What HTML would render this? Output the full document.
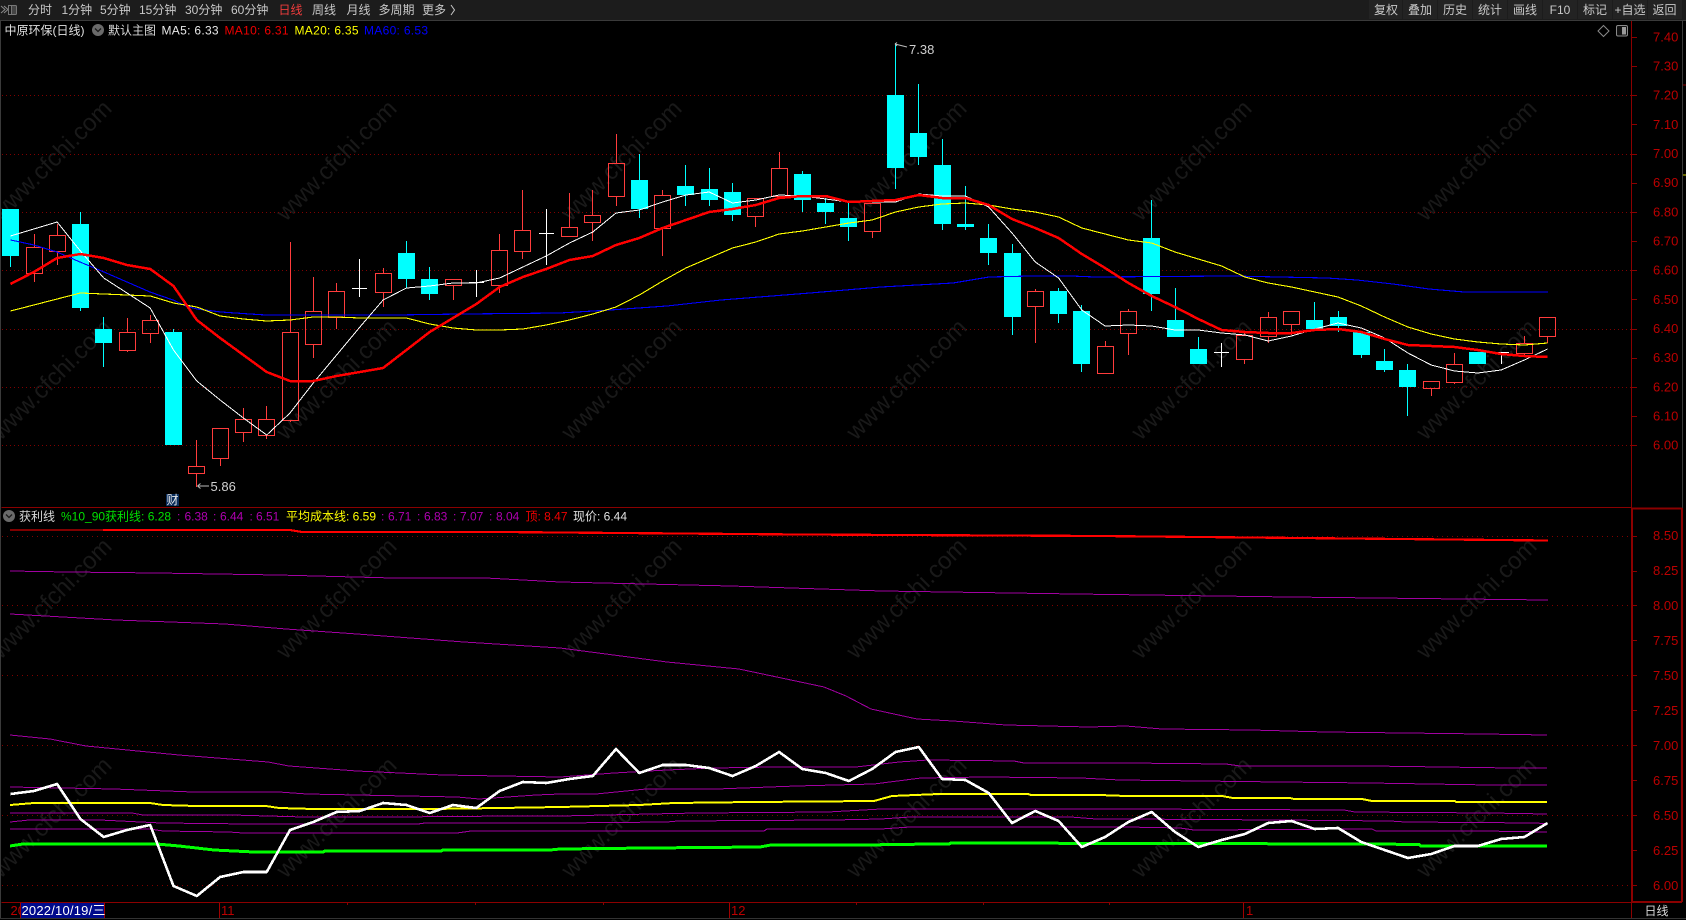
<!DOCTYPE html>
<html lang="zh-CN">
<head>
<meta charset="utf-8">
<title>中原环保(日线)</title>
<style>
html,body{margin:0;padding:0;background:#000;width:1686px;height:920px;overflow:hidden}
svg{display:block;position:absolute;left:0;top:0}
text{font-family:"Liberation Sans","Noto Sans CJK SC",sans-serif;font-size:12px}
.m{fill:#c8c8c8}
.a{fill:#bb0000;font-size:13px}
.wm{fill:#191919;font-size:24px;text-anchor:middle}
.c{text-anchor:middle}
</style>
</head>
<body>
<svg width="1686" height="920" viewBox="0 0 1686 920" xmlns="http://www.w3.org/2000/svg">
<rect width="1686" height="920" fill="#000"/>

<!-- watermark -->
<g class="wm" transform="translate(6 10)">
<text class="wm" x="51" y="156" transform="rotate(-45 51 156)">www.cfchi.com</text>
<text class="wm" x="336" y="156" transform="rotate(-45 336 156)">www.cfchi.com</text>
<text class="wm" x="621" y="156" transform="rotate(-45 621 156)">www.cfchi.com</text>
<text class="wm" x="906" y="156" transform="rotate(-45 906 156)">www.cfchi.com</text>
<text class="wm" x="1191" y="156" transform="rotate(-45 1191 156)">www.cfchi.com</text>
<text class="wm" x="1476" y="156" transform="rotate(-45 1476 156)">www.cfchi.com</text>
<text class="wm" x="51" y="375" transform="rotate(-45 51 375)">www.cfchi.com</text>
<text class="wm" x="336" y="375" transform="rotate(-45 336 375)">www.cfchi.com</text>
<text class="wm" x="621" y="375" transform="rotate(-45 621 375)">www.cfchi.com</text>
<text class="wm" x="906" y="375" transform="rotate(-45 906 375)">www.cfchi.com</text>
<text class="wm" x="1191" y="375" transform="rotate(-45 1191 375)">www.cfchi.com</text>
<text class="wm" x="1476" y="375" transform="rotate(-45 1476 375)">www.cfchi.com</text>
<text class="wm" x="51" y="594" transform="rotate(-45 51 594)">www.cfchi.com</text>
<text class="wm" x="336" y="594" transform="rotate(-45 336 594)">www.cfchi.com</text>
<text class="wm" x="621" y="594" transform="rotate(-45 621 594)">www.cfchi.com</text>
<text class="wm" x="906" y="594" transform="rotate(-45 906 594)">www.cfchi.com</text>
<text class="wm" x="1191" y="594" transform="rotate(-45 1191 594)">www.cfchi.com</text>
<text class="wm" x="1476" y="594" transform="rotate(-45 1476 594)">www.cfchi.com</text>
<text class="wm" x="51" y="813" transform="rotate(-45 51 813)">www.cfchi.com</text>
<text class="wm" x="336" y="813" transform="rotate(-45 336 813)">www.cfchi.com</text>
<text class="wm" x="621" y="813" transform="rotate(-45 621 813)">www.cfchi.com</text>
<text class="wm" x="906" y="813" transform="rotate(-45 906 813)">www.cfchi.com</text>
<text class="wm" x="1191" y="813" transform="rotate(-45 1191 813)">www.cfchi.com</text>
<text class="wm" x="1476" y="813" transform="rotate(-45 1476 813)">www.cfchi.com</text>
</g>

<!-- grid -->
<g stroke="#800000" stroke-width="1" stroke-dasharray="1 3" fill="none" shape-rendering="crispEdges">
<path d="M2 95.5H1632M2 154.5H1632M2 212.5H1632M2 270.5H1632M2 329.5H1632M2 387.5H1632M2 445.5H1632"/>
</g>
<g stroke="#800000" stroke-width="1" stroke-dasharray="1 4" fill="none" shape-rendering="crispEdges">
<path d="M2 536.5H1632M2 605.5H1632M2 675.5H1632M2 745.5H1632M2 815.5H1632M2 885.5H1632"/>
</g>

<!-- cyan candles -->
<g shape-rendering="crispEdges">
<path fill="none" stroke="#00ffff" stroke-width="1" d="M10.5 209V267M80.5 212V311M103.5 317V367M173.5 329V332M406.5 241V288M429.5 267V300M639.5 154V218M685.5 165V206M709.5 168V206M732.5 183V221M802.5 171V212M825.5 198V224M848.5 203V241M895.5 43V189M918.5 84V165M942.5 139V230M965.5 186V230M988.5 224V265M1012.5 244V335M1058.5 288V323M1081.5 305V372M1151.5 200V311M1175.5 288V337M1198.5 337V364M1314.5 302V330M1338.5 311V332M1361.5 332V358M1384.5 349V372M1407.5 364V416"/>
<path fill="#00ffff" d="M2 209h17v47h-17zM72 224h17v84h-17zM95 329h17v14h-17zM165 332h17v113h-17zM398 253h17v26h-17zM421 279h17v15h-17zM631 180h17v29h-17zM677 186h17v9h-17zM701 189h17v11h-17zM724 192h17v23h-17zM794 174h17v26h-17zM817 203h17v9h-17zM840 218h17v9h-17zM887 95h17v73h-17zM910 133h17v24h-17zM934 165h17v59h-17zM957 224h17v3h-17zM980 238h17v15h-17zM1004 253h17v64h-17zM1050 291h17v23h-17zM1073 311h17v53h-17zM1143 238h17v56h-17zM1167 320h17v17h-17zM1190 349h17v15h-17zM1306 320h17v9h-17zM1330 317h17v9h-17zM1353 332h17v23h-17zM1376 361h17v9h-17zM1399 370h17v17h-17zM1469 352h17v12h-17z"/>
</g>

<!-- red candles -->
<g fill="none" stroke="#ff3c3c" stroke-width="1" shape-rendering="crispEdges">
<path d="M34.5 234V247M34.5 273V282M26.5 247.5h16v26h-16zM57.5 224V235M57.5 251V265M49.5 235.5h16v16h-16zM127.5 318V332M127.5 350V352M119.5 332.5h16v18h-16zM150.5 315V320M150.5 333V343M142.5 320.5h16v13h-16zM196.5 440V466M196.5 473V487M188.5 466.5h16v7h-16zM220.5 458V466M212.5 428.5h16v30h-16zM243.5 408V419M243.5 432V442M235.5 419.5h16v13h-16zM266.5 406V419M266.5 435V439M258.5 419.5h16v16h-16zM290.5 242V332M290.5 420V422M282.5 332.5h16v88h-16zM313.5 277V311M313.5 344V358M305.5 311.5h16v33h-16zM336.5 283V291M336.5 317V329M328.5 291.5h16v26h-16zM383.5 268V273M383.5 292V307M375.5 273.5h16v19h-16zM453.5 285V300M445.5 279.5h16v6h-16zM499.5 234V250M499.5 285V293M491.5 250.5h16v35h-16zM522.5 190V230M522.5 251V259M514.5 230.5h16v21h-16zM569.5 193V227M561.5 227.5h16v9h-16zM592.5 190V215M592.5 222V241M584.5 215.5h16v7h-16zM616.5 134V163M616.5 196V206M608.5 163.5h16v33h-16zM662.5 190V195M662.5 228V256M654.5 195.5h16v33h-16zM755.5 216V227M747.5 198.5h16v18h-16zM779.5 152V168M771.5 168.5h16v28h-16zM872.5 231V238M864.5 203.5h16v28h-16zM1035.5 289V291M1035.5 306V343M1027.5 291.5h16v15h-16zM1105.5 341V346M1097.5 346.5h16v27h-16zM1128.5 309V311M1128.5 333V355M1120.5 311.5h16v22h-16zM1244.5 332V335M1244.5 359V364M1236.5 335.5h16v24h-16zM1268.5 312V317M1268.5 336V343M1260.5 317.5h16v19h-16zM1291.5 324V335M1283.5 311.5h16v13h-16zM1431.5 388V396M1423.5 381.5h16v7h-16zM1454.5 353V364M1454.5 382V384M1446.5 364.5h16v18h-16zM1524.5 336V343M1524.5 353V355M1516.5 343.5h16v10h-16zM1547.5 336V343M1539.5 317.5h16v19h-16z"/>
</g>
<!-- white crosses -->
<path fill="none" stroke="#fff" stroke-width="1" shape-rendering="crispEdges" d="M359.5 259V297M352 288.5H367M476.5 270V297M469 282.5H484M546.5 209V265M539 233.5H554M1221.5 343V367M1214 352.5H1229M1501.5 352V364M1494 352.5H1509"/>

<!-- MA lines -->
<g fill="none" stroke-linejoin="round" shape-rendering="crispEdges">
<polyline stroke="#0000ff" stroke-width="1.1" points="10.7,240 34,245 57,252 80,262 104,272 127,282 150,292 173,300 186,306 197,309 221,312 250,314 266,315 290,315 393,315 464,314 560,313 610,310 667,306 721,300 810,293 881,287 953,283 989,277 1031,276 1071,276 1095,277 1232,276 1279,277 1327,278 1357,280 1393,284 1429,289 1464,292 1548,292"/>
<polyline stroke="#ffff00" stroke-width="1.1" points="10.5,311 33.8,305 57.1,299 80.4,293 103.7,294 127,295 150.2,296 173.5,303 196.8,307 220.1,316 243.4,319 266.7,321 290,320 313.3,317 336.6,317 359.9,318 383.1,318 406.4,318 429.7,324 453,328 476.3,330 499.6,330 522.9,329 546.2,325 569.5,320 592.8,314 616,307 639.3,295 662.6,281 685.9,268 709.2,258 732.5,248 755.8,242 779.1,234 802.4,231 825.7,227 848.9,223 872.2,220 895.5,212 918.8,207 942.1,204 965.4,203 988.7,205 1012,209 1035.3,212 1058.6,217 1081.8,228 1105.1,234 1128.4,240 1151.7,243 1175,252 1198.3,259 1221.6,266 1244.9,277 1268.2,283 1291.5,287 1314.7,292 1338,297 1361.3,306 1384.6,317 1407.9,327 1431.2,334 1454.5,339 1477.8,342 1501.1,344 1524.4,345 1547.6,343"/>
<polyline stroke="#ffffff" stroke-width="1" points="10.5,236 33.8,229 57.1,222 80.4,251 103.7,278 127,293 150.2,308 173.5,350 196.8,381 220.1,400 243.4,418 266.7,435 290,413 313.3,383 336.6,355 359.9,327 383.1,300 406.4,288 429.7,286 453,283 476.3,283 499.6,278 522.9,267 546.2,256 569.5,243 592.8,232 616,213 639.3,210 662.6,202 685.9,195 709.2,192 732.5,203 755.8,200 779.1,195 802.4,196 825.7,199 848.9,202 872.2,202 895.5,202 918.8,194 942.1,196 965.4,196 988.7,207 1012,233 1035.3,262 1058.6,278 1081.8,310 1105.1,326 1128.4,325 1151.7,326 1175,330 1198.3,330 1221.6,333 1244.9,335 1268.2,341 1291.5,336 1314.7,329 1338,323 1361.3,328 1384.6,338 1407.9,353 1431.2,365 1454.5,371 1477.8,373 1501.1,370 1524.4,360 1547.6,349"/>
<polyline stroke="#ff0000" stroke-width="2.5" points="10.5,284 33.8,272 57.1,258 80.4,254 103.7,258 127,265 150.2,269 173.5,286 196.8,320 220.1,338 243.4,355 266.7,372 290,381 313.3,381 336.6,376 359.9,372 383.1,368 406.4,350 429.7,332 453,318 476.3,304 499.6,287 522.9,277 546.2,269 569.5,260 592.8,256 616,245 639.3,238 662.6,228 685.9,220 709.2,212 732.5,209 755.8,205 779.1,198 802.4,196 825.7,196 848.9,202 872.2,201 895.5,200 918.8,195 942.1,198 965.4,198 988.7,205 1012,219 1035.3,228 1058.6,238 1081.8,254 1105.1,268 1128.4,283 1151.7,296 1175,307 1198.3,319 1221.6,330 1244.9,332 1268.2,333 1291.5,333 1314.7,330 1338,329 1361.3,332 1384.6,339 1407.9,345 1431.2,346 1454.5,347 1477.8,350 1501.1,354 1524.4,356 1547.6,357"/>
</g>

<!-- lower pane lines -->
<g fill="none" stroke-linejoin="round" shape-rendering="crispEdges">
<g stroke="#a000a0" stroke-width="1">
<polyline points="10,571 68,572 157,573 278,575 393,578 486,578 560,582 731,586 882,591 1075,594 1290,597 1548,600"/>
<polyline points="10,614 116,620 225,624 286,629 357,634 464,642 560,648 667,662 739,669 824,687 846,696 871,709 917,719 953,721 1006,725 1089,727 1126,726 1162,729 1251,730 1326,732 1483,734 1547,735"/>
<polyline points="10,735 50,739 86,746 179,755 268,762 289,766 357,771 443,775 560,777 614,773 667,770 714,768 774,767 856,767 899,762 928,760 1014,761 1024,763 1126,763 1226,764 1240,766 1372,766 1512,768 1547,768"/>
<polyline points="10,787 114,789 193,792 279,792 307,794 457,797 479,799 536,795 560,794 596,794 646,789 717,789 796,786 874,784 921,778 985,777 1081,778 1120,780 1280,782 1369,783 1490,785 1547,785"/>
<polyline points="10,813 132,813 143,815 232,815 304,817 393,817 511,816 560,816 696,813 828,812 881,809 949,809 1126,809 1344,810 1355,812 1490,813 1547,814"/>
<polyline points="10,822 29,820 100,820 161,823 250,824 418,824 425,823 560,823 667,822 678,821 833,820 881,819 910,817 1071,817 1096,819 1126,819 1280,820 1390,821 1405,822 1537,823 1547,824"/>
<polyline points="10,829 150,829 163,831 229,832 243,833 457,833 471,831 560,831 764,831 767,829 881,829 910,827 1126,827 1180,828 1194,830 1372,829 1376,831 1483,831 1547,832"/>
</g>
<polyline stroke="#ff0000" stroke-width="1" points="10,530 103,530"/>
<polyline stroke="#ff0000" stroke-width="2.2" points="103,530 290,530 302,532 500,532 800,534.5 1100,536 1300,538 1548,540.5"/>
<polyline stroke="#ffff00" stroke-width="2" points="10,805 34,803 150,803 163,805 196,806 266,806 279,808 314,809 429,809 500,808 560,807 639,805 674,803 753,802 874,801 892,796 939,794 1028,794 1031,795 1099,795 1126,796 1222,796 1233,798 1290,798 1294,799 1362,799 1372,801 1455,801 1456,802 1547,802"/>
<polyline stroke="#00ff00" stroke-width="3" points="10,846 23,844 157,844 179,846 214,850 254,852 323,852 325,851 441,851 443,850 550,850 560,849 649,848 760,847 771,845 880,845 881,844.5 949,844 951,843 1372,844 1419,844.5 1421,846 1547,846"/>
<polyline stroke="#ffffff" stroke-width="2.6" points="10.5,794 33.8,791 57.1,784 80.4,819 103.7,837 127,830 150.2,825 173.5,886 196.8,896 220.1,877 243.4,872 266.7,872 290,830 313.3,822 336.6,812 359.9,811 383.1,803 406.4,805 429.7,813 453,805 476.3,808 499.6,791 522.9,782 546.2,783 569.5,779 592.8,776 616,749 639.3,773 662.6,765 685.9,765 709.2,768 732.5,776 755.8,766 779.1,752 802.4,769 825.7,773 848.9,781 872.2,769 895.5,752 918.8,747 942.1,779 965.4,780 988.7,793 1012,823 1035.3,811 1058.6,821 1081.8,847 1105.1,837 1128.4,822 1151.7,812 1175,832 1198.3,847 1221.6,840 1244.9,834 1268.2,823 1291.5,821 1314.7,829 1338,828 1361.3,842 1384.6,850 1407.9,858 1431.2,854 1454.5,846 1477.8,846 1501.1,839 1524.4,837 1547.6,823"/>
</g>

<!-- annotations -->
<path fill="none" stroke="#bbb" stroke-width="1" d="M895 44l12 3M895 44l2-1.5M895 44l2 2"/>
<text x="909" y="54" fill="#d0d0d0" style="font-size:13px">7.38</text>
<path fill="none" stroke="#bbb" stroke-width="1" d="M197.5 486H209M197.5 486l3-2.5M197.5 486l3 2.5"/>
<text x="210.5" y="491" fill="#d0d0d0" style="font-size:13px">5.86</text>
<rect x="166" y="494" width="13" height="12" fill="#0a2d5c"/>
<text x="172.5" y="504" fill="#e8e8e8" class="c" style="font-size:12px">财</text>

<!-- frames -->
<g shape-rendering="crispEdges" fill="none">
<path stroke="#3a3a3a" d="M0.5 21V918M1682.5 21V508"/>
<path stroke="#8b0000" d="M1631.5 21V508M1.5 507.5H1632M1.5 902.5H1632M1631.5 902V918"/>
<path stroke="#8b0000" stroke-width="2" d="M1632 508.5H1682M1632 902H1682M1632 508V902M1682 508V902"/>
<path stroke="#8b0000" d="M1632 37.5h5M1632 66.5h5M1632 95.5h5M1632 124.5h5M1632 154.5h5M1632 183.5h5M1632 212.5h5M1632 241.5h5M1632 270.5h5M1632 299.5h5M1632 329.5h5M1632 358.5h5M1632 387.5h5M1632 416.5h5M1632 445.5h5M1632 536.5h5M1632 571.5h5M1632 605.5h5M1632 640.5h5M1632 675.5h5M1632 710.5h5M1632 745.5h5M1632 780.5h5M1632 815.5h5M1632 850.5h5M1632 885.5h5"/>
<path stroke="#8b0000" d="M347.5 903v2M475.5 903v2M603.5 903v2M856.5 903v2M983.5 903v2M1109.5 903v2M1683 85h3"/>
<path stroke="#cccc00" d="M1683 175h3"/>
<path stroke="#a00000" d="M219.5 903V918M729.5 903V918M1243.5 903V918"/>
</g>

<!-- axis labels -->
<text class="a" x="1653" y="41.5">7.40</text>
<text class="a" x="1653" y="70.5">7.30</text>
<text class="a" x="1653" y="99.5">7.20</text>
<text class="a" x="1653" y="129">7.10</text>
<text class="a" x="1653" y="158">7.00</text>
<text class="a" x="1653" y="187">6.90</text>
<text class="a" x="1653" y="216.5">6.80</text>
<text class="a" x="1653" y="245.5">6.70</text>
<text class="a" x="1653" y="274.5">6.60</text>
<text class="a" x="1653" y="304">6.50</text>
<text class="a" x="1653" y="333">6.40</text>
<text class="a" x="1653" y="362">6.30</text>
<text class="a" x="1653" y="391.5">6.20</text>
<text class="a" x="1653" y="420.5">6.10</text>
<text class="a" x="1653" y="449.5">6.00</text>
<text class="a" x="1653" y="540">8.50</text>
<text class="a" x="1653" y="575">8.25</text>
<text class="a" x="1653" y="610">8.00</text>
<text class="a" x="1653" y="645">7.75</text>
<text class="a" x="1653" y="680">7.50</text>
<text class="a" x="1653" y="715">7.25</text>
<text class="a" x="1653" y="750">7.00</text>
<text class="a" x="1653" y="785">6.75</text>
<text class="a" x="1653" y="820">6.50</text>
<text class="a" x="1653" y="855">6.25</text>
<text class="a" x="1653" y="890">6.00</text>

<!-- bottom axis -->
<text class="a" x="10.5" y="915">20</text>
<rect x="21" y="903" width="84" height="15" fill="#000a8c"/>
<path d="M20.5 903V918M104.5 903V918" stroke="#a00000" shape-rendering="crispEdges"/>
<text x="21.5" y="915" fill="#fff" style="font-size:13px;letter-spacing:.2px">2022/10/19/三</text>
<text class="a" x="221" y="915">11</text>
<text class="a" x="731" y="915">12</text>
<text class="a" x="1246" y="915">1</text>
<text x="1656.5" y="915" class="c" fill="#d8d8d8" style="font-size:12px">日线</text>
<rect x="0" y="918" width="1686" height="2" fill="#000"/>
<path d="M0 918.5H1686" stroke="#333" shape-rendering="crispEdges"/>

<!-- top toolbar -->
<rect x="0" y="0" width="1686" height="20" fill="#1c1c1c"/>
<rect x="0" y="20" width="1686" height="1" fill="#3a3a3a"/>
<g fill="#232323">
<rect x="1369" y="0" width="33" height="19"/><rect x="1403" y="0" width="34" height="19"/><rect x="1438" y="0" width="34" height="19"/><rect x="1473" y="0" width="34" height="19"/><rect x="1508" y="0" width="34" height="19"/><rect x="1543" y="0" width="34" height="19"/><rect x="1578" y="0" width="34" height="19"/><rect x="1613" y="0" width="34" height="19"/><rect x="1648" y="0" width="34" height="19"/>
</g>
<path fill="none" stroke="#8a8a8a" stroke-width="1" d="M1 6l4 3.5-4 3.5M4 6l4 3.5-4 3.5"/>
<rect x="8.5" y="5.5" width="8" height="9" fill="#444" stroke="#777" rx="1"/>
<rect x="8.5" y="5.5" width="3" height="9" fill="#1c1c1c" stroke="#777"/>
<text class="m" x="28" y="14">分时</text>
<text class="m" x="61.5" y="14">1分钟</text>
<text class="m" x="100" y="14">5分钟</text>
<text class="m" x="139" y="14">15分钟</text>
<text class="m" x="185" y="14">30分钟</text>
<text class="m" x="231" y="14">60分钟</text>
<text x="278.5" y="14" fill="#f03c3c">日线</text>
<text class="m" x="312" y="14">周线</text>
<text class="m" x="346.5" y="14">月线</text>
<text class="m" x="378.5" y="14">多周期</text>
<text class="m" x="422" y="14">更多</text>
<path fill="none" stroke="#c8c8c8" d="M451 5l3.5 5-3.5 5"/>
<text class="m c" x="1386" y="14">复权</text>
<text class="m c" x="1420" y="14">叠加</text>
<text class="m c" x="1455" y="14">历史</text>
<text class="m c" x="1490" y="14">统计</text>
<text class="m c" x="1525" y="14">画线</text>
<text class="m c" x="1560" y="14">F10</text>
<text class="m c" x="1595" y="14">标记</text>
<text class="m c" x="1630" y="14">+自选</text>
<text class="m c" x="1664.5" y="14">返回</text>

<!-- top header -->
<text x="4.5" y="34.5" fill="#e0e0e0">中原环保(日线)</text>
<circle cx="98" cy="30" r="6" fill="#6a6a6a"/>
<path fill="none" stroke="#1a1a1a" stroke-width="1.3" d="M95 28.5l3 3 3-3"/>
<text x="108" y="34.5" fill="#d8d8d8">默认主图</text>
<text x="161.5" y="34.5" fill="#e8e8e8" style="letter-spacing:.3px">MA5: 6.33</text>
<text x="224.5" y="34.5" fill="#f00000" style="letter-spacing:.3px">MA10: 6.31</text>
<text x="294.5" y="34.5" fill="#ffff00" style="letter-spacing:.3px">MA20: 6.35</text>
<text x="364" y="34.5" fill="#0000ff" style="letter-spacing:.3px">MA60: 6.53</text>
<path fill="none" stroke="#8a8a8a" d="M1603.5 25.5l5.5 5.5-5.5 5.5-5.5-5.5z"/>
<rect x="1616.5" y="25.5" width="11" height="10.5" rx="1.5" fill="#111" stroke="#8a8a8a"/>
<rect x="1622" y="27" width="4" height="7.5" fill="#9a9a9a"/>

<!-- lower header -->
<circle cx="9" cy="516" r="6" fill="#6a6a6a"/>
<path fill="none" stroke="#1a1a1a" stroke-width="1.3" d="M6 514.5l3 3 3-3"/>
<text x="19" y="520.5" fill="#d8d8d8">获利线</text>
<text x="61" y="520.5" fill="#00e000">%10_90获利线: 6.28</text>
<text x="177" y="520.5" fill="#b000b0">:</text>
<text x="184.5" y="520.5" fill="#b000b0">6.38</text>
<text x="213" y="520.5" fill="#b000b0">:</text>
<text x="220" y="520.5" fill="#b000b0">6.44</text>
<text x="249.5" y="520.5" fill="#b000b0">:</text>
<text x="256" y="520.5" fill="#b000b0">6.51</text>
<text x="286" y="520.5" fill="#ffff00">平均成本线: 6.59</text>
<text x="381" y="520.5" fill="#b000b0">:</text>
<text x="388" y="520.5" fill="#b000b0">6.71</text>
<text x="417" y="520.5" fill="#b000b0">:</text>
<text x="424" y="520.5" fill="#b000b0">6.83</text>
<text x="453" y="520.5" fill="#b000b0">:</text>
<text x="460" y="520.5" fill="#b000b0">7.07</text>
<text x="489" y="520.5" fill="#b000b0">:</text>
<text x="496" y="520.5" fill="#b000b0">8.04</text>
<text x="525.5" y="520.5" fill="#f00000">顶: 8.47</text>
<text x="573" y="520.5" fill="#e0e0e0">现价: 6.44</text>
</svg>
</body>
</html>
